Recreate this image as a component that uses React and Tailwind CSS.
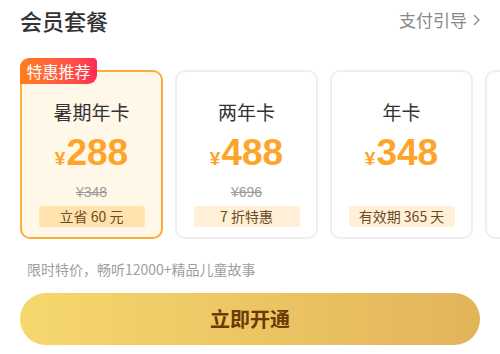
import React from "react";

const CJK = { fontFamily: '"Noto Sans CJK SC", "Noto Sans", sans-serif' };
const NUM = { fontFamily: '"Liberation Sans", "Noto Sans CJK SC", sans-serif' };

function Card({ title, price, old, tag, active, empty }) {
  return (
    <div
      className={
        "relative shrink-0 w-[143px] h-[169px] rounded-[10px] border-2 flex flex-col items-center pt-[26px] " +
        (active ? "border-[#fcac3c] bg-[#fff7e8]" : "border-[#eeeeee] bg-white")
      }
    >
      {active && (
        <div
          className="absolute left-[-2px] top-[-14px] w-[77px] h-[26px] rounded-tl-[9px] rounded-tr-[4px] rounded-br-[9px] flex items-center justify-center text-white text-[16px] bg-gradient-to-r from-[#ff7e16] to-[#ff2a52]"
          style={CJK}
        >
          特惠推荐
        </div>
      )}
      {!empty && (
        <>
          <div className="h-[28px] leading-[28px] text-[19px] text-[#333333]" style={CJK}>
            {title}
          </div>
          <div className="mt-[7px] h-[40px] flex items-baseline text-[#fda429] font-bold" style={NUM}>
            <span className="text-[19px] mr-[1px]">¥</span>
            <span className="text-[37px] leading-[40px]">{price}</span>
          </div>
          <div className="mt-[9px] h-[20px] leading-[20px] text-[14px] text-[#9a9a9a] line-through" style={NUM}>
            {old}
          </div>
          <div
            className={
              "mt-[4px] w-[106px] h-[21px] rounded-[3px] flex items-center justify-center text-[14px] text-[#6e4a1e] " +
              (active ? "bg-[#ffe2ae]" : "bg-[#fff0d7]")
            }
            style={CJK}
          >
            {tag}
          </div>
        </>
      )}
    </div>
  );
}

export default function App() {
  return (
    <div className="w-[500px] h-[354px] bg-white overflow-hidden" style={CJK}>
      <div className="flex items-center justify-between px-5 pt-[6px] h-[34px]">
        <div className="text-[22px] text-[#333333] font-medium leading-[28px]">会员套餐</div>
        <div className="flex items-center text-[17px] text-[#888888] mr-[-2px]">
          <span>支付引导</span>
          <svg width="10" height="14" viewBox="0 0 10 14" className="ml-[5px]">
            <path d="M2.5 2.5 L7 7 L2.5 11.5" fill="none" stroke="#8a8a8a" strokeWidth="1.4" strokeLinecap="round" strokeLinejoin="round" />
          </svg>
        </div>
      </div>
      <div className="flex gap-3 pl-5 mt-[36px]">
        <Card active title="暑期年卡" price="288" old="¥348" tag="立省 60 元" />
        <Card title="两年卡" price="488" old="¥696" tag="7 折特惠" />
        <Card title="年卡" price="348" old="" tag="有效期 365 天" />
        <Card empty />
      </div>
      <div className="pl-[27px] mt-[20px] text-[14px] text-[#9e9e9e] leading-[20px]">
        限时特价，畅听12000+精品儿童故事
      </div>
      <div className="px-5 mt-[14px]">
        <div className="h-[52px] rounded-full bg-gradient-to-r from-[#f6d86d] to-[#e2b45a] flex items-center justify-center text-[20px] font-semibold text-[#6a3906]">
          立即开通
        </div>
      </div>
    </div>
  );
}
